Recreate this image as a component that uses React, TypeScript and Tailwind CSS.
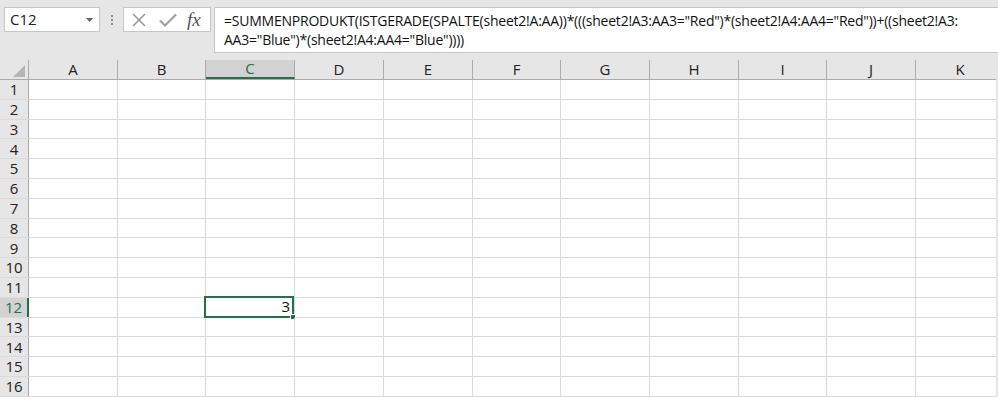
import React from "react";

const cols = [
  { label: "A", w: "w-[89px]" },
  { label: "B", w: "w-[88px]" },
  { label: "C", w: "w-[89px]" },
  { label: "D", w: "w-[89px]" },
  { label: "E", w: "w-[89px]" },
  { label: "F", w: "w-[88px]" },
  { label: "G", w: "w-[89px]" },
  { label: "H", w: "w-[89px]" },
  { label: "I", w: "w-[88px]" },
  { label: "J", w: "w-[89px]" },
  { label: "K", w: "w-[89px]" },
];

const rows = Array.from({ length: 16 }, (_, i) => i + 1);

const font = "font-['Open_Sans',sans-serif]";

const App: React.FC = () => {
  return (
    <div className={`w-[998px] h-[397px] overflow-hidden bg-[#e6e6e6] ${font}`}>
      {/* formula bar */}
      <div className="flex h-[60px] pt-[7px] items-start">
        <div className="ml-[4px] w-[96px] h-[25px] bg-white border border-[#c6c6c6] flex items-center justify-between pl-[5px] pr-[6px]">
          <span className="text-[15px] text-[#222]">C12</span>
          <svg width="7" height="4" viewBox="0 0 7 4">
            <path d="M0 0 L7 0 L3.5 4 Z" fill="#666" />
          </svg>
        </div>
        <div className="w-[23px] h-[25px] flex flex-col items-center justify-center gap-[2px]">
          <span className="w-[2px] h-[2px] bg-[#888]" />
          <span className="w-[2px] h-[2px] bg-[#888]" />
          <span className="w-[2px] h-[2px] bg-[#888]" />
        </div>
        <div className="w-[88px] h-[25px] bg-white border border-[#c6c6c6] flex items-center pl-[7px]">
          <svg width="16" height="16" viewBox="0 0 16 16">
            <path d="M2 2 L14 14 M14 2 L2 14" stroke="#9a9a9a" strokeWidth="1.6" />
          </svg>
          <svg className="ml-[12px]" width="18" height="16" viewBox="0 0 18 16">
            <path d="M1 8.5 L6 13.5 L17 2.5" stroke="#a0a0a0" strokeWidth="2.2" fill="none" />
          </svg>
          <span className="ml-[10px] font-['Liberation_Serif',serif] italic text-[19px] text-[#555] leading-none">
            fx
          </span>
        </div>
        <div className="ml-[3px] flex-1 h-[46px] bg-white border border-[#c6c6c6] border-r-0 pl-[9px] pt-[3px] text-[14px] leading-[19px] text-[#111] tracking-[-0.23px]">
          <div className="whitespace-nowrap">
            =SUMMENPRODUKT(ISTGERADE(SPALTE(sheet2!A:AA))*(((sheet2!A3:AA3="Red")*(sheet2!A4:AA4="Red"))+((sheet2!A3:
          </div>
          <div className="whitespace-nowrap">AA3="Blue")*(sheet2!A4:AA4="Blue"))))</div>
        </div>
      </div>

      {/* sheet */}
      <div className="w-[996px] bg-white">
        <div className="flex h-[20px] bg-[#e6e6e6] border-b border-[#ababab]">
          <div className="w-[29px] shrink-0 border-r border-[#ababab] relative">
            <svg className="absolute right-[3px] bottom-[2px]" width="12" height="12" viewBox="0 0 12 12">
              <path d="M12 0 L12 12 L0 12 Z" fill="#b6b6b6" />
            </svg>
          </div>
          {cols.map((c) => (
            <div
              key={c.label}
              className={`${c.w} shrink-0 flex items-center justify-center text-[15px] ${
                c.label === "C"
                  ? "bg-[#d2d2d2] text-[#217346] border-b-2 border-[#217346] border-r border-r-[#ababab]"
                  : "text-[#222] border-r border-[#ababab]"
              }`}
            >
              {c.label}
            </div>
          ))}
        </div>
        {rows.map((r) => (
          <div key={r} className="flex h-[19.8px] border-b border-[#dadada]">
            <div
              className={`w-[29px] shrink-0 flex items-center justify-center text-[15px] ${
                r === 12
                  ? "bg-[#d2d2d2] text-[#217346] border-r-2 border-[#217346]"
                  : "bg-[#e6e6e6] text-[#222] border-r border-[#ababab]"
              }`}
            >
              {r}
            </div>
            {cols.map((c) => (
              <div key={c.label} className={`${c.w} shrink-0 border-r border-[#dadada] relative`}>
                {r === 12 && c.label === "C" && (
                  <div className="absolute -left-[2px] -top-[2px] right-0 -bottom-[1px] border-2 border-[#217346] flex items-center justify-end pr-[2px] text-[15px] text-[#111]">
                    3
                    <span className="absolute -right-[4px] -bottom-[4px] w-[6px] h-[6px] bg-[#217346] border border-white" />
                  </div>
                )}
              </div>
            ))}
          </div>
        ))}
      </div>
    </div>
  );
};

export default App;
